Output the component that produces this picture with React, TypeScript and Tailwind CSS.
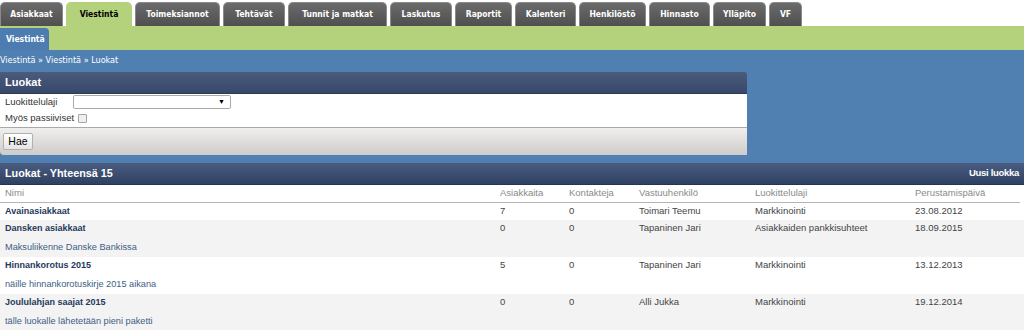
import React from "react";

const tabs = [
  { label: "Asiakkaat", w: "w-[63px]" },
  { label: "Viestintä", w: "w-[66px]", active: true },
  { label: "Toimeksiannot", w: "w-[85px]" },
  { label: "Tehtävät", w: "w-[62px]" },
  { label: "Tunnit ja matkat", w: "w-[99px]" },
  { label: "Laskutus", w: "w-[62px]" },
  { label: "Raportit", w: "w-[57px]" },
  { label: "Kalenteri", w: "w-[61px]" },
  { label: "Henkilöstö", w: "w-[67px]" },
  { label: "Hinnasto", w: "w-[61px]" },
  { label: "Ylläpito", w: "w-[53px]" },
  { label: "VF", w: "w-[33px]" },
];

const rows = [
  { name: "Avainasiakkaat", a: "7", k: "0", v: "Toimari Teemu", l: "Markkinointi", p: "23.08.2012", desc: "" },
  { name: "Dansken asiakkaat", a: "0", k: "0", v: "Tapaninen Jari", l: "Asiakkaiden pankkisuhteet", p: "18.09.2015", desc: "Maksuliikenne Danske Bankissa" },
  { name: "Hinnankorotus 2015", a: "5", k: "0", v: "Tapaninen Jari", l: "Markkinointi", p: "13.12.2013", desc: "näille hinnankorotuskirje 2015 aikana" },
  { name: "Joululahjan saajat 2015", a: "0", k: "0", v: "Alli Jukka", l: "Markkinointi", p: "19.12.2014", desc: "tälle luokalle lähetetään pieni paketti" },
];

const cols = "grid grid-cols-[495px_69px_70px_116px_160px_1fr] pl-[5px]";

export default function App() {
  return (
    <div className="w-[1024px] h-[330px] overflow-hidden bg-white font-['Liberation_Sans',Arial,sans-serif] text-[9.5px] text-[#444]">
      {/* main tabs */}
      <div className="flex gap-[3px] pt-[2px] h-[26px] items-stretch">
        {tabs.map((t) => (
          <div
            key={t.label}
            className={`${t.w} shrink-0 rounded-t-[5px] flex items-center justify-center font-['DejaVu_Sans_Condensed','DejaVu_Sans',sans-serif] font-bold text-[8.5px] ${
              t.active
                ? "bg-[#b4d27c] text-black"
                : "bg-gradient-to-b from-[#6b6b6b] to-[#4f4f4f] text-white border border-b-0 border-[#8a8a8a]"
            }`}
          >
            {t.label}
          </div>
        ))}
      </div>

      {/* sub nav */}
      <div className="h-[24px] bg-[#b4d27c] flex items-end">
        <div className="w-[49px] h-[22px] bg-[#4c7cb0] rounded-tr-[4px] flex items-center pl-[6px] text-white font-bold text-[8.5px] font-['DejaVu_Sans_Condensed','DejaVu_Sans',sans-serif]">
          Viestintä
        </div>
      </div>

      {/* blue area */}
      <div className="bg-[#5080b1] pb-[8px]">
        <div className="h-[22px] flex items-center text-white text-[9px] font-medium font-['DejaVu_Sans_Condensed','DejaVu_Sans',sans-serif]">
          Viestintä » Viestintä » Luokat
        </div>

        <div className="w-[747px] rounded-tr-[3px] rounded-bl-[4px] overflow-hidden text-[9.5px] text-[#333]">
          <div className="h-[22px] bg-gradient-to-b from-[#4a5b7c] to-[#37486a] border-b border-[#2c3a55] flex items-center pl-[5px] text-white font-bold text-[11px]">
            Luokat
          </div>
          <div className="bg-white pt-[1px] border-b border-[#a9a9a9]">
            <div className="flex items-center h-[14px] pl-[5px]">
              <span className="w-[68px]">Luokittelulaji</span>
              <div className="w-[158px] h-[14px] border border-[#aaa] rounded-[2px] bg-white flex items-center justify-end pr-[5px] text-[7px] text-black">
                ▼
              </div>
            </div>
            <div className="flex items-center h-[18px] pl-[5px]">
              <span>Myös passiiviset</span>
              <span className="ml-[4px] w-[9px] h-[9px] border border-[#a5a5a5] rounded-[1px] bg-[#efefef]" />
            </div>
          </div>
          <div className="h-[27px] bg-gradient-to-b from-[#f0efed] to-[#cdccca] flex items-center pl-[3px]">
            <button className="h-[17px] w-[30px] border border-[#b0b0b0] rounded-[2px] bg-gradient-to-b from-white to-[#e4e4e4] text-[10.5px] text-black leading-none">
              Hae
            </button>
          </div>
        </div>
      </div>

      {/* list */}
      <div className="h-[22px] bg-gradient-to-b from-[#4a5d80] to-[#2f4162] border-b border-[#26344f] flex items-center justify-between pl-[5px] pr-[5px] text-white font-bold">
        <span className="text-[10.8px]">Luokat - Yhteensä 15</span>
        <span className="text-[9.5px] tracking-[-0.3px]">Uusi luokka</span>
      </div>
      <div className={`${cols} h-[18px] items-center text-[#8a8a8a] border-b border-[#b5b5b5] mr-[4px]`}>
        <span>Nimi</span>
        <span>Asiakkaita</span>
        <span>Kontakteja</span>
        <span>Vastuuhenkilö</span>
        <span>Luokittelulaji</span>
        <span>Perustamispäivä</span>
      </div>
      {rows.map((r, i) => (
        <div key={r.name} className={i % 2 === 1 ? "bg-[#f3f3f3]" : "bg-white"}>
          <div className={`${cols} h-[17px] items-center text-[#444]`}>
            <span className="font-bold text-[9px] text-[#26395a]">{r.name}</span>
            <span>{r.a}</span>
            <span>{r.k}</span>
            <span>{r.v}</span>
            <span>{r.l}</span>
            <span>{r.p}</span>
          </div>
          {r.desc && (
            <div className="h-[20px] flex items-center pl-[5px] pt-[1px] text-[9.2px] text-[#3e5d85]">{r.desc}</div>
          )}
        </div>
      ))}
    </div>
  );
}
